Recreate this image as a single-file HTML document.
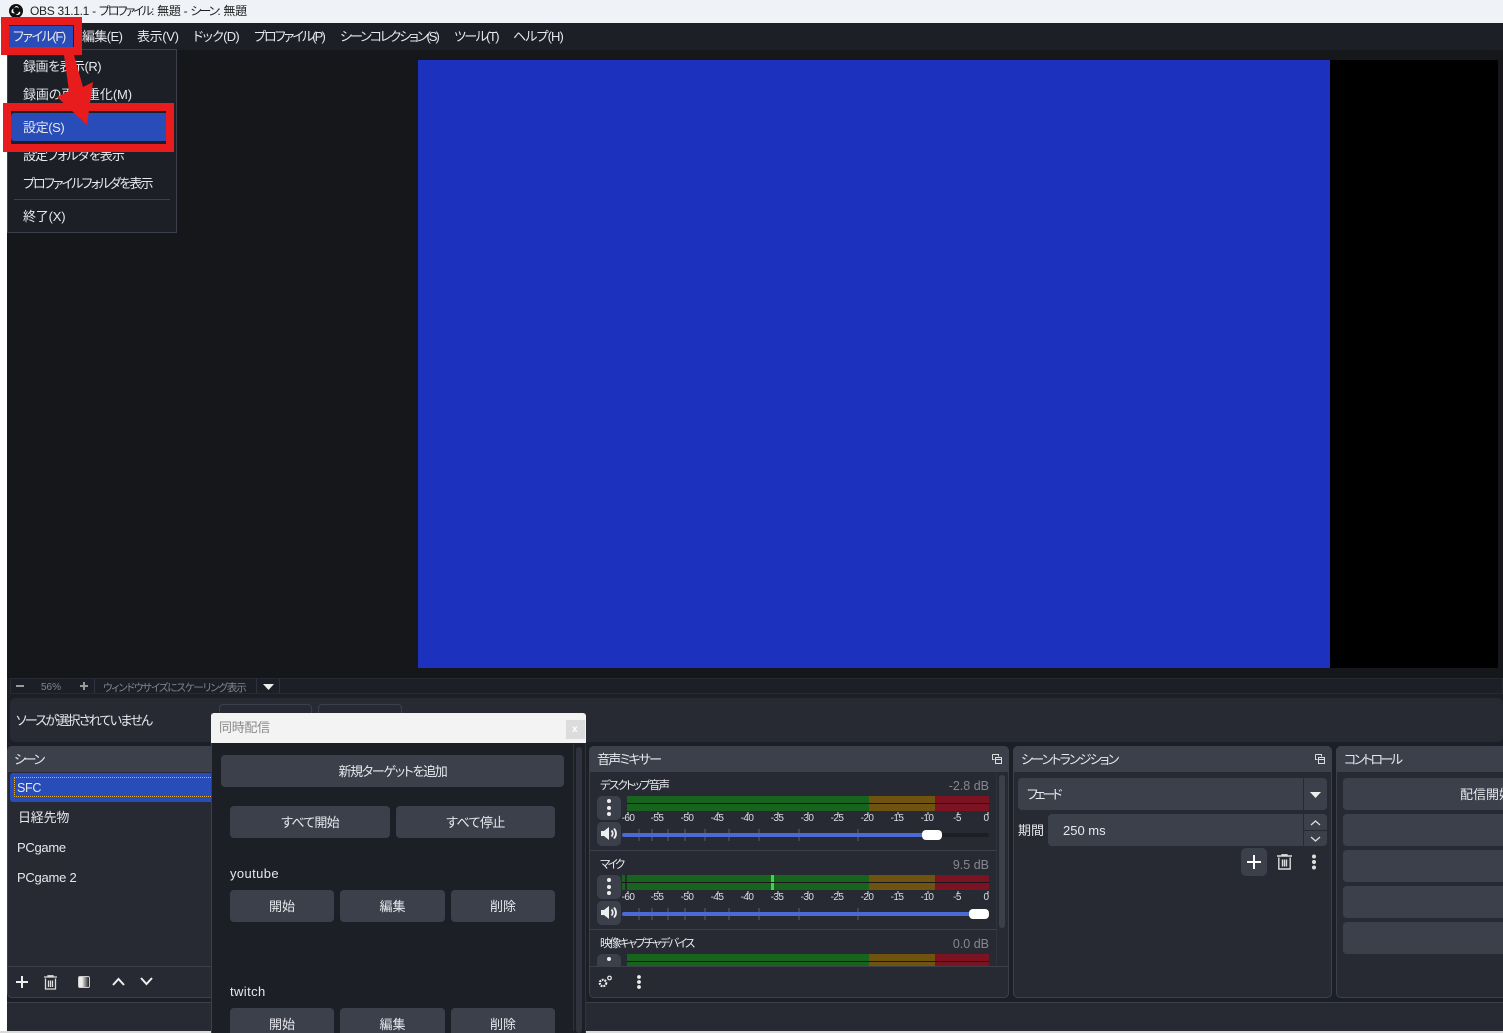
<!DOCTYPE html>
<html lang="ja"><head><meta charset="utf-8"><title>OBS</title>
<style>
html,body{margin:0;padding:0;background:#fff}
#r{position:relative;width:1503px;height:1033px;overflow:hidden;background:#fff;font-family:"Liberation Sans","Noto Sans CJK JP",sans-serif;font-size:13px;color:#e6e8ec;font-feature-settings:"palt"}
#r div{position:absolute;box-sizing:border-box}
#r .t{white-space:nowrap;line-height:20px;height:20px;margin-top:2px}
.b{background:#3c404b;border-radius:4px;text-align:center}
.p{background:#272a33;border:1px solid #3c404b;border-radius:5px}
.h{background:#3c404b;border-radius:5px 5px 0 0}
svg{position:absolute;display:block;overflow:visible}
svg text{font-family:"Liberation Sans",sans-serif}
</style></head><body><div id="r">
<!-- title -->
<div style="left:0;top:0;width:1503px;height:23px;background:#eff3f7"></div>
<svg style="left:9px;top:4px" width="14" height="14" viewBox="0 0 14 14"><circle cx="7" cy="7" r="7" fill="#111"/><path d="M7 2a3 3 0 0 1 3 2.6 3 3 0 0 0-4.6-.6A3 3 0 0 1 7 2zM2.6 8.5a3 3 0 0 1 2.2-4 3 3 0 0 0 1 4.6 3 3 0 0 1-3.2-.6zM11.400 8.500a3 3 0 0 1-5 1.800 3 3 0 0 0 3.600-2.800 3 3 0 0 1 1.400 1z" fill="#fff"/></svg>
<div class="t" style="left:30px;top:-1px;font-size:12px;color:#222;letter-spacing:-.3px">OBS 31.1.1 - <span style="letter-spacing:-2px">プロファイル</span>: 無題 - <span style="letter-spacing:-2px">シーン</span>: 無題</div>
<!-- main bg -->
<div style="left:7px;top:23px;width:1496px;height:1008px;background:#1d1f26"></div>
<div style="left:0;top:1031px;width:1503px;height:2px;background:#d9d9d9"></div>
<div style="left:7px;top:50px;width:1496px;height:628px;background:#15171b"></div>
<div style="left:418px;top:60px;width:912px;height:608px;background:#1c31bd"></div>
<div style="left:1330px;top:60px;width:168px;height:608px;background:#000"></div>
<!-- menubar -->
<div style="left:9px;top:26px;width:64px;height:21px;background:#284cb8"></div>
<div class="t" style="left:13px;top:25px;letter-spacing:-1.4px">ファイル(F)</div>
<div class="t" style="left:82px;top:25px;letter-spacing:-.6px">編集(E)</div>
<div class="t" style="left:137px;top:25px;letter-spacing:-.35px">表示(V)</div>
<div class="t" style="left:193px;top:25px;letter-spacing:-.7px">ドック(D)</div>
<div class="t" style="left:254px;top:25px;letter-spacing:-1.9px">プロファイル(P)</div>
<div class="t" style="left:340px;top:25px;letter-spacing:-2px">シーンコレクション(S)</div>
<div class="t" style="left:454px;top:25px;letter-spacing:-1.6px">ツール(T)</div>
<div class="t" style="left:513px;top:25px;letter-spacing:-.9px">ヘルプ(H)</div>
<!-- zoom bar -->
<div style="left:10px;top:678px;width:1493px;height:16px;border:1px solid #272a33;background:#1d1f26"></div>
<div style="left:94px;top:679px;width:1px;height:14px;background:#30333d"></div>
<div style="left:256px;top:679px;width:1px;height:14px;background:#30333d"></div>
<div style="left:279px;top:679px;width:1px;height:14px;background:#30333d"></div>
<div style="left:16px;top:685px;width:8px;height:2px;background:#999"></div>
<div class="t" style="left:41px;top:676px;font-size:10px;color:#808590">56%</div>
<div style="left:80px;top:685px;width:8px;height:2px;background:#999"></div>
<div style="left:83px;top:682px;width:2px;height:8px;background:#999"></div>
<div class="t" style="left:103px;top:676px;font-size:10.500px;color:#808590;letter-spacing:-1.1px">ウィンドウサイズにスケーリング表示</div>
<svg style="left:263px;top:684px" width="11" height="6"><path d="M0 0h11L5.500 6z" fill="#eee"/></svg>
<!-- source bar -->
<div style="left:10px;top:698px;width:1493px;height:44px;background:#272a33;border-radius:5px"></div>
<div class="t" style="left:16px;top:709px;letter-spacing:-1.75px">ソースが選択されていません</div>
<div style="left:219px;top:704px;width:93px;height:30px;border:1px solid #3c404b;border-radius:4px"></div>
<div style="left:318px;top:704px;width:84px;height:30px;border:1px solid #3c404b;border-radius:4px"></div>
<!-- scenes -->
<div class="p" style="left:7px;top:746px;width:210px;height:252px"></div>
<div class="h" style="left:7px;top:746px;width:210px;height:26px"></div>
<div class="t" style="left:14px;top:748px;letter-spacing:-2.3px">シーン</div>
<div style="left:10px;top:773px;width:205px;height:29px;background:#284cb8;border-radius:3px"></div>
<div style="left:14px;top:777px;width:201px;height:20px;border:1px dotted #e8b23c;border-right:0"></div>
<div class="t" style="left:17px;top:776px;font-size:12.500px;letter-spacing:-.3px">SFC</div>
<div class="t" style="left:18px;top:806px;letter-spacing:-.2px">日経先物</div>
<div class="t" style="left:17px;top:836px;letter-spacing:-.3px">PCgame</div>
<div class="t" style="left:17px;top:866px;letter-spacing:-.25px">PCgame 2</div>
<div style="left:8px;top:966px;width:205px;height:1px;background:#3c404b"></div>
<svg style="left:15px;top:975px" width="14" height="14"><path d="M7 1v12M1 7h12" stroke="#eee" stroke-width="2" fill="none"/></svg>
<svg style="left:44px;top:975px" width="13" height="15" viewBox="0 0 13 15"><path d="M0 2h13M4 2V.8h5V2M1.500 3.500V14h10V3.500M4.500 5.500v6.500M6.500 5.500v6.500M8.500 5.500v6.500" stroke="#ddd" stroke-width="1.300" fill="none"/></svg>
<div style="left:78px;top:976px;width:12px;height:12px;border:1px solid #ccc;border-radius:2px;background:linear-gradient(90deg,#eee,#eee 30%,#222)"></div>
<svg style="left:112px;top:977px" width="13" height="9"><path d="M1 8l5.500-6L12 8" stroke="#eee" stroke-width="2" fill="none"/></svg>
<svg style="left:140px;top:977px" width="13" height="9"><path d="M1 1l5.500 6L12 1" stroke="#eee" stroke-width="2" fill="none"/></svg>
<!-- lower dock area -->
<div style="left:7px;top:1002px;width:1496px;height:29px;background:#272a33;border-top:1px solid #3c404b"></div>
<!-- mixer -->
<div class="p" style="left:589px;top:746px;width:420px;height:252px"></div>
<div class="h" style="left:589px;top:746px;width:420px;height:26px"></div>
<div class="t" style="left:597px;top:748px;letter-spacing:-1.8px">音声ミキサー</div>
<svg style="left:992px;top:754px" width="10" height="10"><path d="M.5.500h6v2M.5.500v5h2M3.500 3.500h6v6h-6zM3.500 5.500h6" stroke="#ddd" fill="none"/></svg>
<div style="left:996px;top:773px;width:1px;height:193px;background:#30333d"></div>
<div style="left:999px;top:775px;width:6px;height:153px;background:#3c404b;border-radius:3px"></div>
<div style="left:590px;top:850px;width:406px;height:1px;background:#3c404b"></div>
<div style="left:590px;top:929px;width:406px;height:1px;background:#3c404b"></div>
<div class="t" style="left:600px;top:774px;font-size:11.500px;letter-spacing:-1.85px">デスクトップ音声</div>
<div class="t" style="left:600px;top:853px;font-size:11.500px;letter-spacing:-2.6px">マイク</div>
<div class="t" style="left:600px;top:932px;font-size:11.500px;letter-spacing:-2px">映像キャプチャデバイス</div>
<div class="t" style="right:514px;top:774px;font-size:12.500px;color:#85888f">-2.8 dB</div>
<div class="t" style="right:514px;top:853px;font-size:12.500px;color:#85888f">9.5 dB</div>
<div class="t" style="right:514px;top:932px;font-size:12.500px;color:#85888f">0.0 dB</div>
<svg style="left:0;top:0" width="1503" height="1033">
<g><rect x="627" y="796" width="242" height="15" fill="#18631d"/><rect x="869" y="796" width="66" height="15" fill="#6e5410"/><rect x="935" y="796" width="54" height="15" fill="#7c1323"/><rect x="627" y="803" width="362" height="1" fill="#16181d"/></g>
<rect x="622" y="875" width="3" height="15" fill="#18631d"/>
<rect x="627" y="875" width="242" height="15" fill="#18631d"/><rect x="869" y="875" width="66" height="15" fill="#6e5410"/><rect x="935" y="875" width="54" height="15" fill="#7c1323"/><rect x="771" y="875" width="3" height="15" fill="#3bd64a"/><rect x="622" y="882" width="367" height="1" fill="#16181d"/>
<rect x="627" y="954" width="242" height="12" fill="#18631d"/><rect x="869" y="954" width="66" height="12" fill="#6e5410"/><rect x="935" y="954" width="54" height="12" fill="#7c1323"/><rect x="627" y="961" width="362" height="1" fill="#16181d"/>
<g fill="#dcdfe4" font-size="10" text-anchor="middle" letter-spacing="-.6">
<text x="628" y="821">-60</text><text x="657" y="821">-55</text><text x="687" y="821">-50</text><text x="717" y="821">-45</text><text x="747" y="821">-40</text><text x="777" y="821">-35</text><text x="807" y="821">-30</text><text x="837" y="821">-25</text><text x="867" y="821">-20</text><text x="897" y="821">-15</text><text x="927" y="821">-10</text><text x="957" y="821">-5</text><text x="986" y="821">0</text>
<text x="628" y="900">-60</text><text x="657" y="900">-55</text><text x="687" y="900">-50</text><text x="717" y="900">-45</text><text x="747" y="900">-40</text><text x="777" y="900">-35</text><text x="807" y="900">-30</text><text x="837" y="900">-25</text><text x="867" y="900">-20</text><text x="897" y="900">-15</text><text x="927" y="900">-10</text><text x="957" y="900">-5</text><text x="986" y="900">0</text>
</g>
<path d="M639 829v12M652 829v12M668 829v12M685 829v12M705 829v12M729 829v12M759 829v12M799 829v12M858 829v12M639 908v12M652 908v12M668 908v12M685 908v12M705 908v12M729 908v12M759 908v12M799 908v12M858 908v12" stroke="#5a5e68" fill="none"/>
<path d="M628 812v3M658 812v3M688 812v3M718 812v3M748 812v3M778 812v3M808 812v3M838 812v3M868 812v3M898 812v3M928 812v3M958 812v3M988 812v3M628 891v3M658 891v3M688 891v3M718 891v3M748 891v3M778 891v3M808 891v3M838 891v3M868 891v3M898 891v3M928 891v3M958 891v3M988 891v3" stroke="#dcdfe4" fill="none"/>
<rect x="622" y="833" width="367" height="4" rx="2" fill="#1d1f26"/>
<rect x="622" y="833" width="305" height="4" rx="2" fill="#4a6bd6"/>
<rect x="922" y="830" width="20" height="10" rx="4" fill="#fff"/>
<rect x="622" y="912" width="355" height="4" rx="2" fill="#4a6bd6"/>
<rect x="969" y="909" width="20" height="10" rx="4" fill="#fff"/>
</svg>
<div class="b" style="left:597px;top:796px;width:24px;height:24px;border-radius:5px"></div>
<div class="b" style="left:597px;top:822px;width:24px;height:24px;border-radius:5px"></div>
<div class="b" style="left:597px;top:875px;width:24px;height:24px;border-radius:5px"></div>
<div class="b" style="left:597px;top:901px;width:24px;height:24px;border-radius:5px"></div>
<div class="b" style="left:597px;top:954px;width:24px;height:12px;border-radius:5px 5px 0 0"></div>
<svg style="left:0;top:0" width="1503" height="1033" fill="#eee">
<circle cx="609" cy="801" r="2"/><circle cx="609" cy="808" r="2"/><circle cx="609" cy="814" r="2"/>
<circle cx="609" cy="880" r="2"/><circle cx="609" cy="887" r="2"/><circle cx="609" cy="893" r="2"/>
<circle cx="609" cy="959" r="2"/>
<path d="M601 831h3l5-4v13l-5-4h-3z"/><path d="M611.500 830.500q2.500 3 0 6M614 828.500q4 5 0 10" stroke="#eee" stroke-width="1.800" fill="none"/>
<path d="M601 910h3l5-4v13l-5-4h-3z"/><path d="M611.500 909.500q2.500 3 0 6M614 907.500q4 5 0 10" stroke="#eee" stroke-width="1.800" fill="none"/>
<circle cx="639" cy="977" r="1.900"/><circle cx="639" cy="982" r="1.900"/><circle cx="639" cy="987" r="1.900"/>
<circle cx="603" cy="983" r="3.200" fill="none" stroke="#eee" stroke-width="2.200" stroke-dasharray="1.800 .9"/><circle cx="609.500" cy="978" r="1.800" fill="none" stroke="#eee" stroke-width="1.200"/>
</svg>
<div style="left:590px;top:966px;width:418px;height:1px;background:#3c404b"></div>
<!-- transitions -->
<div class="p" style="left:1013px;top:746px;width:319px;height:252px"></div>
<div class="h" style="left:1013px;top:746px;width:319px;height:26px"></div>
<div class="t" style="left:1021px;top:748px;letter-spacing:-1.8px">シーントランジション</div>
<svg style="left:1315px;top:754px" width="10" height="10"><path d="M.5.500h6v2M.5.500v5h2M3.500 3.500h6v6h-6zM3.500 5.500h6" stroke="#ddd" fill="none"/></svg>
<div class="b" style="left:1018px;top:778px;width:309px;height:32px"></div>
<div class="t" style="left:1027px;top:783px;letter-spacing:-3px">フェード</div>
<div style="left:1303px;top:778px;width:1px;height:32px;background:#272a33"></div>
<svg style="left:1310px;top:792px" width="11" height="6"><path d="M0 0h11L5.500 6z" fill="#eee"/></svg>
<div class="t" style="left:1018px;top:819px">期間</div>
<div class="b" style="left:1048px;top:814px;width:279px;height:32px"></div>
<div class="t" style="left:1063px;top:819px">250 ms</div>
<div style="left:1303px;top:814px;width:1px;height:32px;background:#272a33"></div>
<div style="left:1304px;top:830px;width:23px;height:1px;background:#272a33"></div>
<svg style="left:1310px;top:820px" width="11" height="22"><path d="M1 5l4.500-4L10 5M1 17l4.500 4L10 17" stroke="#ddd" stroke-width="1.300" fill="none"/></svg>
<div class="b" style="left:1241px;top:848px;width:26px;height:28px;border-radius:5px"></div>
<svg style="left:1247px;top:855px" width="14" height="14"><path d="M7 0v14M0 7h14" stroke="#fff" stroke-width="2" fill="none"/></svg>
<svg style="left:1277px;top:854px" width="15" height="16" viewBox="0 0 15 16"><path d="M0 2h15M5 2V.8h5V2M1.800 3.500V15h11.400V3.500M5.500 5.500v7M7.500 5.500v7M9.500 5.500v7" stroke="#ddd" stroke-width="1.400" fill="none"/></svg>
<svg style="left:1311px;top:854px" width="6" height="16" fill="#ddd"><circle cx="3" cy="2.500" r="2"/><circle cx="3" cy="8" r="2"/><circle cx="3" cy="13.500" r="2"/></svg>
<!-- controls -->
<div class="p" style="left:1336px;top:746px;width:180px;height:252px"></div>
<div class="h" style="left:1336px;top:746px;width:180px;height:26px"></div>
<div class="t" style="left:1344px;top:748px;letter-spacing:-2.500px">コントロール</div>
<div class="b" style="left:1343px;top:778px;width:170px;height:32px"></div>
<div class="t" style="left:1460px;top:783px">配信開始</div>
<div class="b" style="left:1343px;top:814px;width:170px;height:32px"></div>
<div class="b" style="left:1343px;top:850px;width:170px;height:32px"></div>
<div class="b" style="left:1343px;top:886px;width:170px;height:32px"></div>
<div class="b" style="left:1343px;top:922px;width:170px;height:32px"></div>
<!-- dialog -->
<div style="left:211px;top:713px;width:375px;height:320px;background:#1d1f26;border-left:1px solid #3c404b;border-right:1px solid #30333d"></div>
<div style="left:211px;top:713px;width:375px;height:30px;background:#f3f3f3;border-radius:3px 3px 0 0"></div>
<div class="t" style="left:219px;top:716px;color:#8a8a8a;letter-spacing:-.3px">同時配信</div>
<div style="left:566px;top:720px;width:19px;height:19px;background:#dcdcdc"></div>
<div class="t" style="left:572px;top:718px;font-size:10px;color:#fff;font-weight:bold">x</div>
<div style="left:573px;top:744px;width:1px;height:287px;background:#30333d"></div>
<div style="left:576px;top:747px;width:6px;height:286px;background:#30333d;border-radius:3px"></div>
<div class="b" style="left:221px;top:755px;width:343px;height:32px"></div>
<div class="t" style="left:221px;top:760px;width:343px;text-align:center;letter-spacing:-1.300px">新規ターゲットを追加</div>
<div class="b" style="left:230px;top:806px;width:160px;height:32px"></div>
<div class="t" style="left:230px;top:811px;width:160px;text-align:center;letter-spacing:-.8px">すべて開始</div>
<div class="b" style="left:396px;top:806px;width:159px;height:32px"></div>
<div class="t" style="left:396px;top:811px;width:159px;text-align:center;letter-spacing:-.6px">すべて停止</div>
<div class="t" style="left:230px;top:862px;letter-spacing:.4px">youtube</div>
<div class="b" style="left:230px;top:890px;width:104px;height:32px"></div>
<div class="t" style="left:230px;top:895px;width:104px;text-align:center">開始</div>
<div class="b" style="left:340px;top:890px;width:105px;height:32px"></div>
<div class="t" style="left:340px;top:895px;width:105px;text-align:center">編集</div>
<div class="b" style="left:451px;top:890px;width:104px;height:32px"></div>
<div class="t" style="left:451px;top:895px;width:104px;text-align:center">削除</div>
<div class="t" style="left:230px;top:980px;letter-spacing:.4px">twitch</div>
<div class="b" style="left:230px;top:1008px;width:104px;height:25px;border-radius:4px 4px 0 0"></div>
<div class="t" style="left:230px;top:1013px;width:104px;text-align:center">開始</div>
<div class="b" style="left:340px;top:1008px;width:105px;height:25px;border-radius:4px 4px 0 0"></div>
<div class="t" style="left:340px;top:1013px;width:105px;text-align:center">編集</div>
<div class="b" style="left:451px;top:1008px;width:104px;height:25px;border-radius:4px 4px 0 0"></div>
<div class="t" style="left:451px;top:1013px;width:104px;text-align:center">削除</div>
<!-- dropdown -->
<div style="left:7px;top:49px;width:170px;height:184px;background:#1d1f26;border:1px solid #3c404b"></div>
<div class="t" style="left:23px;top:55px;letter-spacing:-.5px">録画を表示(R)</div>
<div class="t" style="left:23px;top:83px;letter-spacing:-.1px">録画の再多重化(M)</div>
<div style="left:11px;top:113px;width:155px;height:28px;background:#284cb8;border-radius:3px 0 0 3px"></div>
<div class="t" style="left:23px;top:116px;letter-spacing:-.4px">設定(S)</div>
<div class="t" style="left:23px;top:144px;letter-spacing:-.9px">設定フォルダを表示</div>
<div class="t" style="left:23px;top:172px;letter-spacing:-1.85px">プロファイルフォルダを表示</div>
<div style="left:14px;top:199px;width:156px;height:1px;background:#3c404b"></div>
<div class="t" style="left:23px;top:205px;letter-spacing:-.2px">終了(X)</div>
<!-- red annotations -->
<div style="left:1px;top:17px;width:81px;height:38px;border:8px solid #e81c1c"></div>
<div style="left:3px;top:103px;width:171px;height:49px;border:8px solid #e81c1c"></div>
<svg style="left:0;top:0" width="200" height="160"><path d="M64 55h10l9 32 10-5-6 43-30-28 12-6z" fill="#e81c1c"/></svg>
</div></body></html>
